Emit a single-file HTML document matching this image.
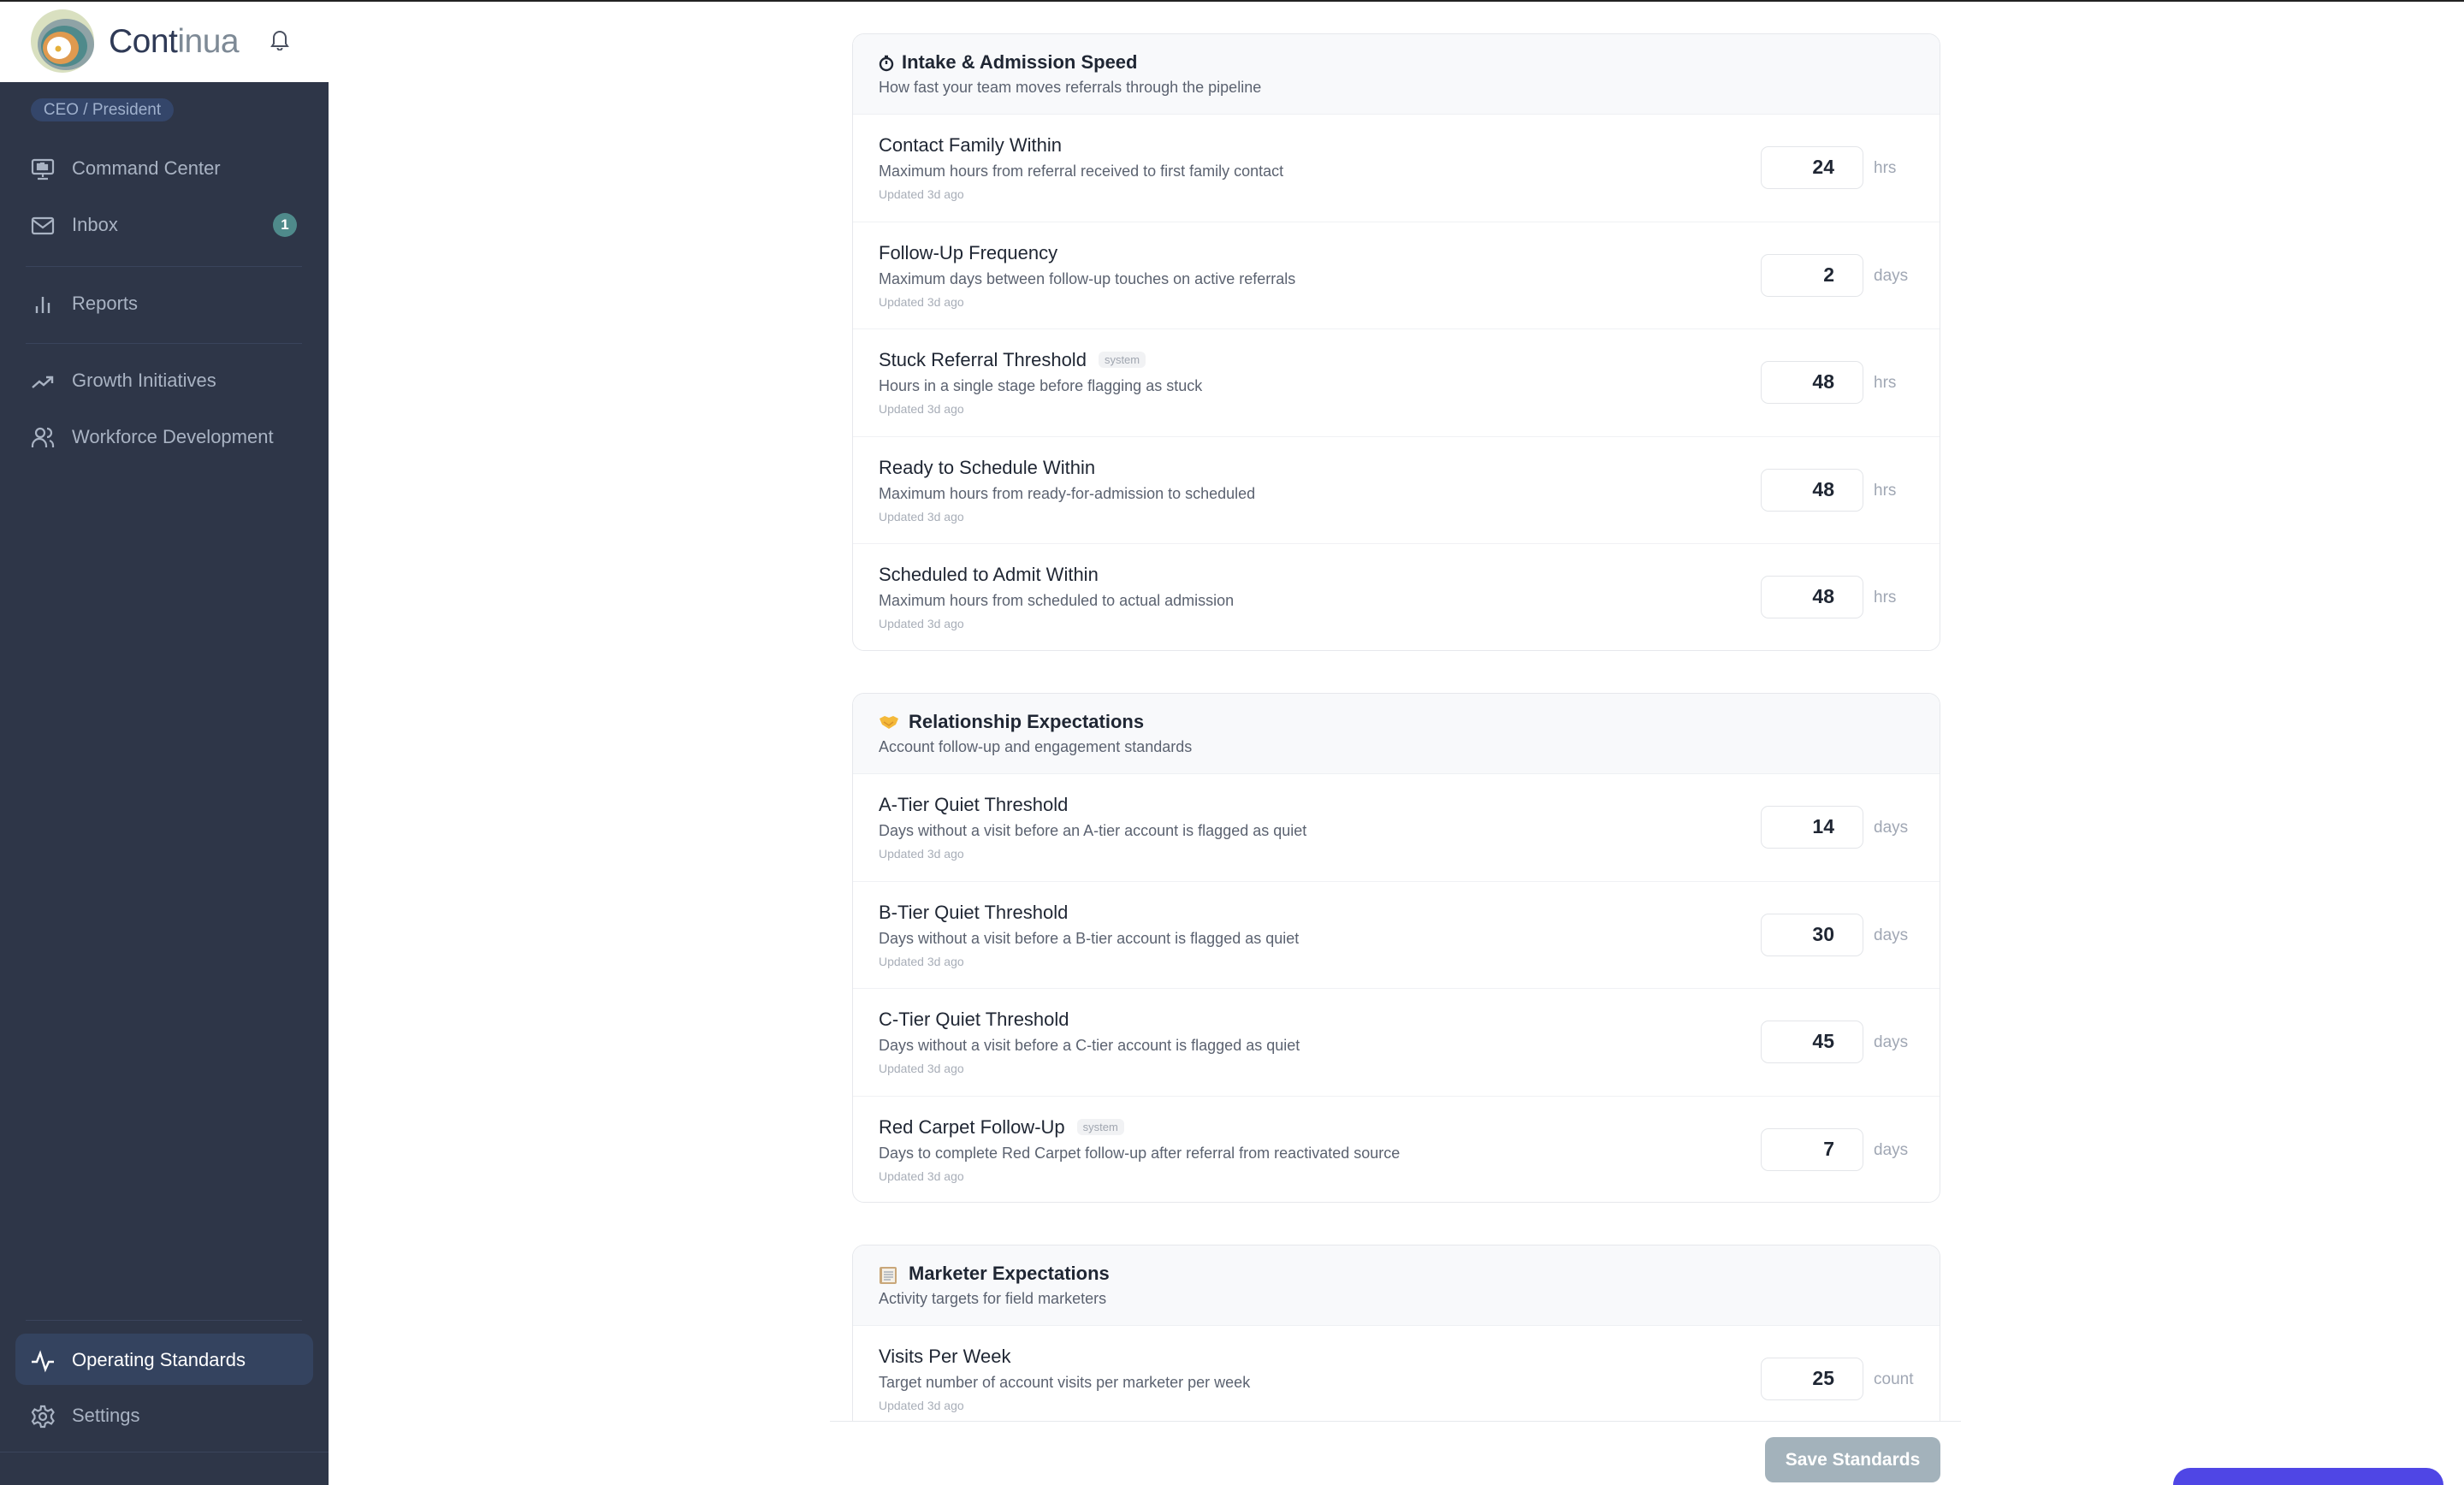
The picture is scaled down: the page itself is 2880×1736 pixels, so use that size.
<!DOCTYPE html>
<html><head><meta charset="utf-8">
<style>
*{box-sizing:border-box;margin:0;padding:0}
html,body{width:2880px;height:1736px;overflow:hidden;background:#fff;font-family:"Liberation Sans",sans-serif;position:relative}
.topline{position:absolute;left:0;top:0;width:2880px;height:2px;background:#222}
.side{position:absolute;left:0;top:96px;width:384px;height:1640px;background:#2e3648}
.logo{position:absolute;left:35px;top:10px;width:76px;height:76px}
.brand{position:absolute;left:127px;top:27px;font-size:39px;color:#2f3a56;letter-spacing:-0.5px}
.brand span{color:#7e8a96}
.pill{position:absolute;left:36px;top:115px;width:167px;height:27px;border-radius:14px;background:#34466a;color:#9fb0cc;font-size:19px;line-height:27px;text-align:center}
.nav{position:absolute;left:0;width:384px;height:40px;color:#a9b3c3;font-size:22px;line-height:40px}
.nav .t{position:absolute;left:84px;top:0}
.nav svg{position:absolute;left:36px;top:7px}
.div{position:absolute;left:30px;width:323px;height:1px;background:#3a445c}
.badge{position:absolute;left:319px;top:249px;width:28px;height:28px;border-radius:14px;background:#4f8a8b;color:#fff;font-size:17px;font-weight:bold;text-align:center;line-height:28px}
.active{position:absolute;left:18px;top:1559px;width:348px;height:60px;border-radius:12px;background:#34435f}
.card{position:absolute;left:996px;width:1272px;border:1.5px solid #e6e8ec;border-radius:14px;background:#fff;overflow:hidden}
.ch{height:94px;background:#f8f9fb;border-bottom:1px solid #eef0f3;position:relative}
.ch .h{position:absolute;left:57px;top:20px;font-size:22px;font-weight:bold;color:#1f2633}
.ch .s{position:absolute;left:30px;top:52px;font-size:18px;color:#5b6270}
.ch .ic{position:absolute;left:30px;top:24px}
.row{position:relative;height:125.5px;border-bottom:1px solid #f0f1f4}
.row:last-child{border-bottom:none}
.row .t{position:absolute;left:30px;top:23px;font-size:22px;color:#1f2633}
.row .d{position:absolute;left:30px;top:56px;font-size:18px;color:#5b6270}
.row .u{position:absolute;left:30px;top:85px;font-size:14px;color:#a8aeb8}
.row .in{position:absolute;left:1061px;top:37px;width:120px;height:50px;border:1.5px solid #e3e5e9;border-radius:9px;text-align:right;padding-right:33px;font-size:23px;font-weight:bold;color:#1f2633;line-height:47px}
.row .un{position:absolute;left:1193px;top:52px;font-size:19px;color:#a0a7b4}
.sys{display:inline-block;margin-left:14px;font-size:13px;color:#a0a6b0;background:#f1f2f4;border-radius:6px;padding:2px 7px;vertical-align:3px;font-weight:normal}
.foot{position:absolute;left:970px;top:1661px;width:1322px;height:75px;background:#fff;border-top:1.5px solid #e6e8ec}
.save{position:absolute;left:2063px;top:1680px;width:205px;height:53px;border-radius:10px;background:#a3b2bb;color:#fff;font-size:21px;font-weight:bold;text-align:center;line-height:53px}
.purple{position:absolute;left:2540px;top:1716px;width:316px;height:20px;border-radius:30px 30px 0 0;background:#4f46e5}
</style></head><body>
<div class="topline"></div>
<svg class="logo" viewBox="0 0 76 76">
<circle cx="38" cy="38" r="37" fill="#d9e0c0"/>
<ellipse cx="42" cy="42" rx="33" ry="30" fill="#8fa3a6"/>
<ellipse cx="40" cy="44" rx="27" ry="24" fill="#4f8a8b"/>
<ellipse cx="36" cy="46" rx="21" ry="19" fill="#e09a4f"/>
<ellipse cx="34" cy="46" rx="14" ry="13" fill="#fff"/>
<circle cx="33" cy="47" r="3.5" fill="#e5b03a"/>
</svg>
<div class="brand">Cont<span>inua</span></div>
<svg style="position:absolute;left:316px;top:33px" width="22" height="26" viewBox="0 0 22 26" fill="none" stroke="#4a5060" stroke-width="2"><path d="M4 18V11a7 7 0 0 1 14 0v7l2 3H2z"/><path d="M8.5 23a2.5 2.5 0 0 0 5 0"/></svg>
<div class="side"></div>
<div class="pill">CEO / President</div>
<div class="nav" style="top:177px"><svg width="28" height="28" viewBox="0 0 28 28" fill="none" stroke="#a9b3c3" stroke-width="2.2"><rect x="2" y="3" width="24" height="16" rx="2"/><path d="M14 19v4M8 25h12"/><rect x="8" y="8" width="3" height="6" fill="#a9b3c3"/><rect x="12" y="7" width="3" height="7" fill="#a9b3c3"/><rect x="16" y="9" width="3" height="5" fill="#a9b3c3"/></svg><span class="t">Command Center</span></div>
<div class="nav" style="top:243px"><svg width="28" height="28" viewBox="0 0 28 28" fill="none" stroke="#a9b3c3" stroke-width="2.2"><rect x="2" y="5" width="24" height="18" rx="2"/><path d="M2 7l12 9 12-9"/></svg><span class="t">Inbox</span></div>
<div class="badge">1</div>
<div class="div" style="top:311px"></div>
<div class="nav" style="top:335px"><svg width="28" height="28" viewBox="0 0 28 28" fill="none" stroke="#a9b3c3" stroke-width="2.4"><path d="M7 24v-8M14 24V5M21 24v-12"/></svg><span class="t">Reports</span></div>
<div class="div" style="top:401px"></div>
<div class="nav" style="top:425px"><svg width="28" height="28" viewBox="0 0 28 28" fill="none" stroke="#a9b3c3" stroke-width="2.4"><path d="M2 21l8-7 5 4 10-9M18 9h7v7"/></svg><span class="t">Growth Initiatives</span></div>
<div class="nav" style="top:491px"><svg width="28" height="28" viewBox="0 0 28 28" fill="none" stroke="#a9b3c3" stroke-width="2.2"><circle cx="11" cy="8" r="5"/><path d="M2 25v-2a8 8 0 0 1 16 0v2M19 3a5 5 0 0 1 0 10M22 17a6 6 0 0 1 4 6v2"/></svg><span class="t">Workforce Development</span></div>
<div class="div" style="top:1543px"></div>
<div class="active"></div>
<div class="nav" style="top:1570px;color:#fff"><svg width="28" height="28" viewBox="0 0 28 28" fill="none" stroke="#fff" stroke-width="2.4"><path d="M1 15h6l4-10 6 19 4-9h6"/></svg><span class="t">Operating Standards</span></div>
<div class="nav" style="top:1635px"><svg width="28" height="28" viewBox="0 0 28 28" fill="none" stroke="#a9b3c3" stroke-width="2.2"><circle cx="14" cy="14" r="4"/><path d="M12 2h4l1 4 3 1.5 4-2 2.5 3.5-2.5 3.5v3l2.5 3.5-2.5 3.5-4-2-3 1.5-1 4h-4l-1-4-3-1.5-4 2L2 19.5 4.5 16v-3L2 9l2.5-3.5 4 2L11.5 6z"/></svg><span class="t">Settings</span></div>
<div class="div" style="top:1697px;left:0;width:384px"></div>

<div class="card" style="top:39px;height:722px">
<div class="ch"><svg class="ic" width="18" height="20" viewBox="0 0 18 20" fill="none" stroke="#1f2633" stroke-width="2.4"><circle cx="9" cy="11" r="7"/><path d="M9 7v4M7 2h4"/></svg><div class="h">Intake &amp; Admission Speed</div><div class="s">How fast your team moves referrals through the pipeline</div></div>
<div class="row"><div class="t">Contact Family Within</div><div class="d">Maximum hours from referral received to first family contact</div><div class="u">Updated 3d ago</div><div class="in">24</div><div class="un">hrs</div></div>
<div class="row"><div class="t">Follow-Up Frequency</div><div class="d">Maximum days between follow-up touches on active referrals</div><div class="u">Updated 3d ago</div><div class="in">2</div><div class="un">days</div></div>
<div class="row"><div class="t">Stuck Referral Threshold<span class="sys">system</span></div><div class="d">Hours in a single stage before flagging as stuck</div><div class="u">Updated 3d ago</div><div class="in">48</div><div class="un">hrs</div></div>
<div class="row"><div class="t">Ready to Schedule Within</div><div class="d">Maximum hours from ready-for-admission to scheduled</div><div class="u">Updated 3d ago</div><div class="in">48</div><div class="un">hrs</div></div>
<div class="row"><div class="t">Scheduled to Admit Within</div><div class="d">Maximum hours from scheduled to actual admission</div><div class="u">Updated 3d ago</div><div class="in">48</div><div class="un">hrs</div></div>
</div>

<div class="card" style="top:810px;height:596px">
<div class="ch"><svg class="ic" width="24" height="18" viewBox="0 0 24 18"><path d="M1 5l6-3 5 2 5-2 6 3-3 7-8 5-8-5z" fill="#f4b93a"/><path d="M6 9l6 4 5-4" fill="none" stroke="#d9932a" stroke-width="1.5"/></svg><div class="h" style="left:65px">Relationship Expectations</div><div class="s">Account follow-up and engagement standards</div></div>
<div class="row"><div class="t">A-Tier Quiet Threshold</div><div class="d">Days without a visit before an A-tier account is flagged as quiet</div><div class="u">Updated 3d ago</div><div class="in">14</div><div class="un">days</div></div>
<div class="row"><div class="t">B-Tier Quiet Threshold</div><div class="d">Days without a visit before a B-tier account is flagged as quiet</div><div class="u">Updated 3d ago</div><div class="in">30</div><div class="un">days</div></div>
<div class="row"><div class="t">C-Tier Quiet Threshold</div><div class="d">Days without a visit before a C-tier account is flagged as quiet</div><div class="u">Updated 3d ago</div><div class="in">45</div><div class="un">days</div></div>
<div class="row"><div class="t">Red Carpet Follow-Up<span class="sys">system</span></div><div class="d">Days to complete Red Carpet follow-up after referral from reactivated source</div><div class="u">Updated 3d ago</div><div class="in">7</div><div class="un">days</div></div>
</div>

<div class="card" style="top:1455px;height:281px;border-bottom:none;border-radius:14px 14px 0 0">
<div class="ch"><svg class="ic" width="22" height="22" viewBox="0 0 22 22"><rect x="1" y="1" width="20" height="20" rx="2" fill="#c9a77a"/><rect x="4" y="3" width="15" height="16" fill="#f4efe6"/><path d="M6 7h11M6 10h11M6 13h11M6 16h8" stroke="#9aa4b0" stroke-width="1.2"/></svg><div class="h" style="left:65px">Marketer Expectations</div><div class="s">Activity targets for field marketers</div></div>
<div class="row"><div class="t">Visits Per Week</div><div class="d">Target number of account visits per marketer per week</div><div class="u">Updated 3d ago</div><div class="in">25</div><div class="un">count</div></div>
</div>

<div class="foot"></div>
<div class="save">Save Standards</div>
<div class="purple"></div>
</body></html>
